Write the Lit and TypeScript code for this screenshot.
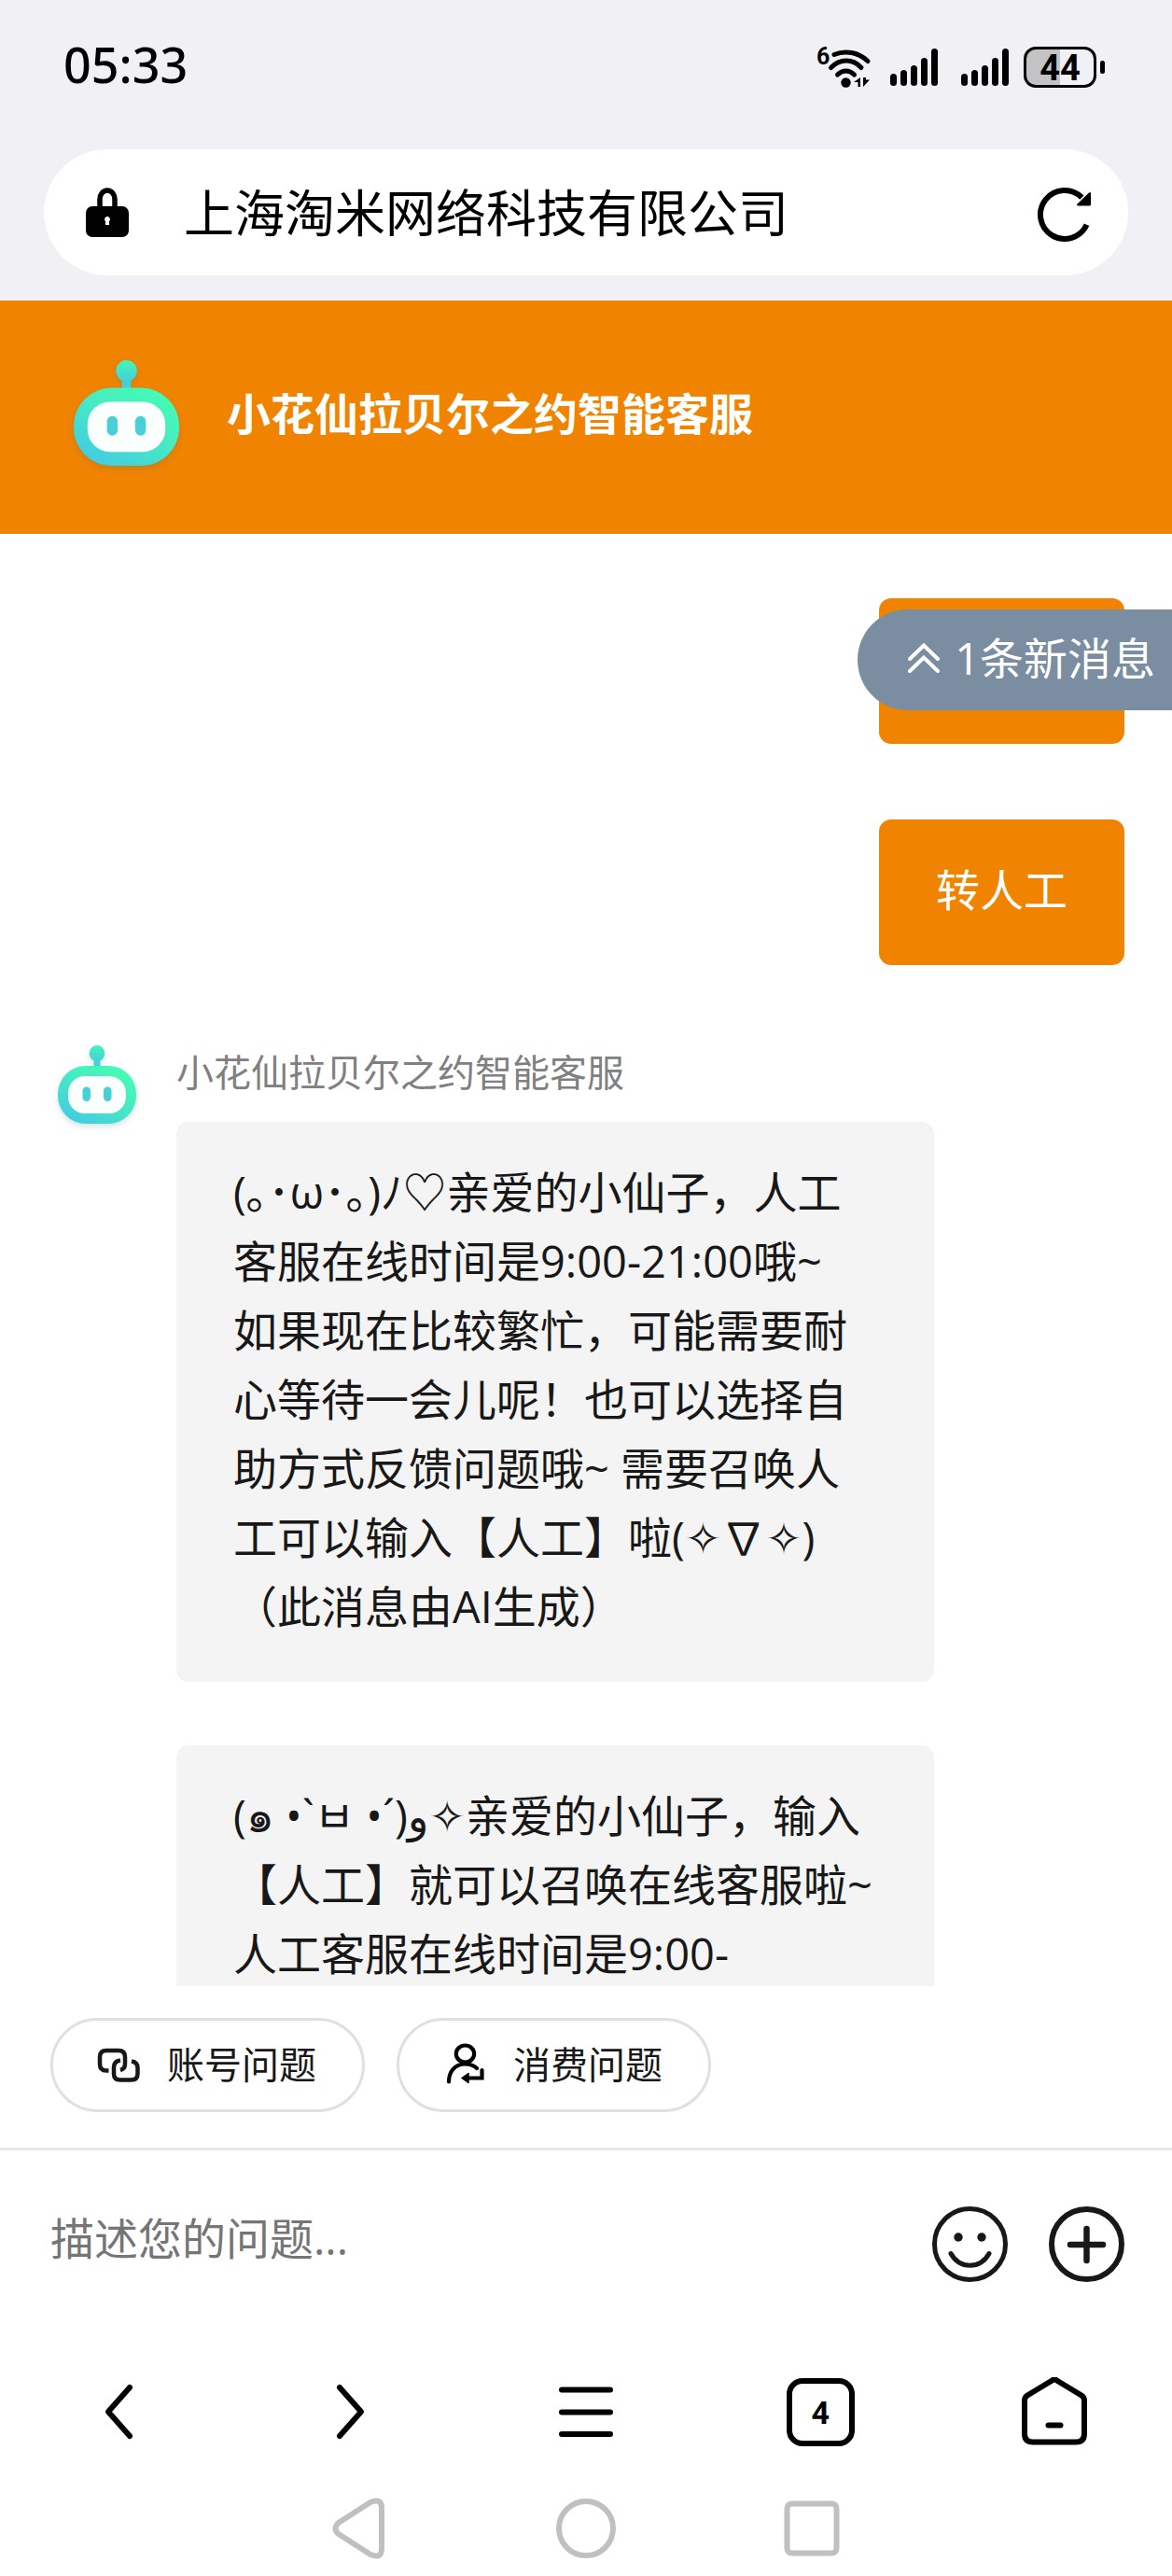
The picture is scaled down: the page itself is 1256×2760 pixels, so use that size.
import { LitElement, html, css, svg } from "lit";
import { customElement, property } from "lit/decorators.js";

@customElement("bot-avatar")
export class BotAvatar extends LitElement {
  static styles = css`
    :host {
      display: block;
      flex: none;
    }
    .robot {
      display: block;
      width: 100%;
      overflow: visible;
      filter: drop-shadow(0 3px 3px rgba(40, 110, 110, 0.2));
    }
  `;

  render() {
    return html`<svg class="robot" viewBox="0 0 84 84" aria-hidden="true">
      <defs>
        <linearGradient id="shell" x1="0.85" y1="0.1" x2="0.2" y2="1">
          <stop offset="0" stop-color="#44fbb4" />
          <stop offset="0.35" stop-color="#47eec0" />
          <stop offset="1" stop-color="#43cbe2" />
        </linearGradient>
        <linearGradient id="ball" x1="0" y1="0" x2="0" y2="1">
          <stop offset="0" stop-color="#45f6b8" />
          <stop offset="1" stop-color="#43d0dc" />
        </linearGradient>
      </defs>
      <rect x="38.5" y="13" width="7" height="12" fill="#43d2da" />
      <path d="M42 0a8.3 8.3 0 0 1 8.3 8.3c0 4-2.2 6-4.3 8h-8c-2.1-2-4.3-4-4.3-8A8.3 8.3 0 0 1 42 0z" fill="url(#ball)" />
      <rect x="0" y="22" width="84" height="62" rx="30" fill="url(#shell)" />
      <rect x="11" y="33" width="62" height="40" rx="18" fill="#fafffe" />
      <rect x="26.5" y="44.5" width="8.5" height="15.5" rx="4.2" fill="#48d0d6" />
      <rect x="49" y="44.5" width="8.5" height="15.5" rx="4.2" fill="#48d0d6" />
    </svg>`;
  }
}

@customElement("status-bar")
export class StatusBar extends LitElement {
  static styles = css`
    :host {
      display: flex;
      align-items: center;
      justify-content: space-between;
      padding: 33px 72px 31px 68px;
      color: #000;
    }
    .clock {
      margin-bottom: 6px;
      font-family: "Noto Sans", sans-serif;
      font-size: 52px;
      line-height: 72px;
      font-weight: 500;
    }
    .tray {
      display: flex;
      align-items: center;
    }
    .tray svg {
      display: block;
      overflow: visible;
    }
    .wifi {
      width: 57px;
      height: 44px;
      margin-right: 21px;
    }
    .six {
      font: 700 25px Roboto, "Liberation Sans", sans-serif;
    }
    .signal {
      width: 51px;
      height: 40px;
      margin-right: 25px;
    }
    .signal.last {
      margin-right: 16px;
    }
    .battery {
      box-sizing: border-box;
      width: 78px;
      height: 44px;
      border: 3px solid #000;
      border-radius: 13px;
      background: linear-gradient(90deg, #c3c3c6 50%, transparent 50%);
      font: 700 38px/40px Roboto, "Liberation Sans", sans-serif;
      text-align: center;
    }
    .nub {
      width: 5px;
      height: 14px;
      margin-left: 4px;
      border-radius: 3px;
      background: #000;
    }
  `;

  private signal(extra: string) {
    const heights = [13, 17, 22, 30, 40];
    return html`<svg class="signal ${extra}" viewBox="0 0 51 40" aria-hidden="true">
      ${heights.map(
        (h, i) => svg`<rect x=${i * 11} y=${40 - h} width="7" height=${h} rx="3.5" />`
      )}
    </svg>`;
  }

  render() {
    return html`
      <time class="clock">05:33</time>
      <div class="tray">
        <svg class="wifi" viewBox="0 0 57 44" role="img" aria-label="Wi-Fi 6">
          <text class="six" x="-1" y="19">6</text>
          <g fill="none" stroke="#000" stroke-width="5" stroke-linecap="round">
            <path d="M18 8.5C30 3.5 44 6 54 15.5" />
            <path d="M14.5 22.5C24 12.5 38 12.5 47 22.5" />
            <path d="M21.5 30C27 24.5 34 24.5 39.5 30" />
          </g>
          <circle cx="30.5" cy="38.5" r="5.2" />
          <path d="M46 33v10h-2.500v-5H39zM49 33v10l7-7.500h-4V33z" />
        </svg>
        ${this.signal("")} ${this.signal("last")}
        <span class="battery">44</span><span class="nub"></span>
      </div>
    `;
  }
}

@customElement("address-bar")
export class AddressBar extends LitElement {
  static styles = css`
    :host {
      display: flex;
      align-items: center;
      box-sizing: border-box;
      height: 135px;
      margin: 18px 47px 27px;
      padding: 0 39px 0 45px;
      border-radius: 68px;
      background: #fff;
      color: #000;
    }
    .lock {
      width: 46px;
      height: 54px;
      margin-right: 59px;
    }
    .site {
      flex: 1;
      font-size: 54px;
      line-height: 72px;
    }
    .reload {
      padding: 4px 0 0;
      border: 0;
      background: none;
    }
    .reload svg {
      display: block;
      width: 58px;
      height: 58px;
      overflow: visible;
    }
  `;

  render() {
    return html`
      <svg class="lock" viewBox="0 0 46 54" aria-hidden="true">
        <path d="M15 22V12.500a8 9.500 0 0 1 16 0V22" fill="none" stroke="#000" stroke-width="5.500" />
        <rect y="20" width="46" height="33" rx="7" />
        <path d="M23 31a3 3 0 0 1 2 5.200V40h-4v-3.800A3 3 0 0 1 23 31z" fill="#fff" />
      </svg>
      <span class="site">上海淘米网络科技有限公司</span>
      <button class="reload" aria-label="刷新">
        <svg viewBox="0 0 58 58">
          <path d="M52.600 39.800A26 26 0 1 1 47.400 10.600" fill="none" stroke="#000" stroke-width="6" />
          <path d="M55 5.500c1-1 2-.5 2 1V18q0 1.500-1.500 1.500H43.500c-1.500 0-2-1-1-2z" />
        </svg>
      </button>
    `;
  }
}

@customElement("chat-bubble")
export class ChatBubble extends LitElement {
  @property({ attribute: false }) lines: string[] = [];
  @property({ reflect: true }) side: "mine" | "bot" = "bot";

  static styles = css`
    :host {
      display: block;
      padding: 38px 61px 44px;
      border-radius: 13px;
      background: #f4f4f4;
      color: #181818;
      font-size: 47px;
      line-height: 74px;
    }
    :host([side="mine"]) {
      align-self: flex-end;
      min-width: 141px;
      background: #f08300;
      color: #fff;
    }
    .line {
      display: block;
      min-height: 74px;
      white-space: nowrap;
    }
  `;

  render() {
    return this.lines.map((line) => html`<span class="line">${line}</span>`);
  }
}

@customElement("chat-log")
export class ChatLog extends LitElement {
  static styles = css`
    :host {
      position: relative;
      display: block;
      flex: 1;
      min-height: 0;
      overflow: hidden;
    }
    .log {
      display: flex;
      flex-direction: column;
      gap: 81px;
      padding: 69px 51px 0 62px;
    }
    .reply {
      display: flex;
      gap: 43px;
      padding-top: 5px;
      padding-right: 204px;
    }
    .avatar {
      width: 84px;
    }
    .thread {
      flex: 1;
      min-width: 0;
    }
    .name {
      margin-bottom: 24px;
      color: #808080;
      font-size: 40px;
      line-height: 58px;
    }
    .thread chat-bubble + chat-bubble {
      margin-top: 68px;
    }
    .unread {
      position: absolute;
      top: 81px;
      right: 0;
      display: flex;
      align-items: center;
      gap: 16px;
      height: 108px;
      padding: 0 18px 4px 54px;
      border: 0;
      border-radius: 54px 0 0 54px;
      background: #7b8da0;
      color: #fff;
      font: inherit;
      font-size: 47px;
      line-height: 74px;
    }
    .unread svg {
      width: 34px;
      height: 34px;
    }
  `;

  private greeting = [
    "(｡･ω･｡)ﾉ♡亲爱的小仙子，人工",
    "客服在线时间是9:00-21:00哦~",
    "如果现在比较繁忙，可能需要耐",
    "心等待一会儿呢！也可以选择自",
    "助方式反馈问题哦~ 需要召唤人",
    "工可以输入【人工】啦(✧∇✧)",
    "（此消息由AI生成）",
  ];

  private hint = [
    "(๑ •`ㅂ •´)و✧亲爱的小仙子，输入",
    "【人工】就可以召唤在线客服啦~",
    "人工客服在线时间是9:00-",
  ];

  render() {
    return html`
      <div class="log">
        <chat-bubble side="mine" .lines=${[""]}></chat-bubble>
        <chat-bubble side="mine" .lines=${["转人工"]}></chat-bubble>
        <div class="reply">
          <bot-avatar class="avatar"></bot-avatar>
          <div class="thread">
            <div class="name">小花仙拉贝尔之约智能客服</div>
            <chat-bubble .lines=${this.greeting}></chat-bubble>
            <chat-bubble .lines=${this.hint}></chat-bubble>
          </div>
        </div>
      </div>
      <button class="unread">
        <svg viewBox="0 0 34 34" fill="none" stroke="#fff" stroke-width="4" stroke-linecap="round" aria-hidden="true">
          <path d="M2 18L17 3.500L32 18M2 31L17 16.500L32 31" />
        </svg>
        1条新消息
      </button>
    `;
  }
}

@customElement("chat-composer")
export class ChatComposer extends LitElement {
  static styles = css`
    :host {
      display: block;
      color: #181818;
    }
    button {
      border: 0;
      background: none;
      color: inherit;
      font: inherit;
    }
    svg {
      display: block;
    }
    .chips {
      display: flex;
      gap: 34px;
      padding: 34px 54px 38px;
    }
    .chip {
      display: flex;
      align-items: center;
      gap: 29px;
      box-sizing: border-box;
      height: 101px;
      padding: 0 49px 2px 45px;
      border: 3px solid #e0e0e0;
      border-radius: 51px;
      font-size: 40px;
      line-height: 58px;
    }
    .chip svg {
      width: 48px;
      height: 48px;
    }
    .entry {
      display: flex;
      align-items: center;
      padding: 60px 51px 60px 54px;
      border-top: 3px solid #e8e8e8;
    }
    .field {
      flex: 1;
      min-width: 0;
      height: 68px;
      margin: 0 20px 13px 0;
      padding: 0;
      border: 0;
      outline: 0;
      background: none;
      color: #181818;
      font: inherit;
      font-size: 47px;
    }
    .field::placeholder {
      color: #757575;
      opacity: 1;
    }
    .tool {
      padding: 0;
    }
    .tool + .tool {
      margin-left: 44px;
    }
    .tool svg {
      width: 81px;
      height: 81px;
    }
  `;

  render() {
    return html`
      <div class="chips">
        <button class="chip">
          <svg viewBox="0 0 48 48" fill="none" stroke="#181818" stroke-width="4.500" aria-hidden="true">
            <path d="M14.500 30.500H12q-7 0-7-7V16q0-7 7-7H25q7 0 7 7v7.500q0 5-5 6.500" />
            <path d="M27 19.500q-7 1-7 7.500v7q0 6.500 7 6.500H38.500q7 0 7-6.500V27.500q0-6-6.500-7" />
          </svg>
          账号问题
        </button>
        <button class="chip">
          <svg viewBox="0 0 48 48" fill="none" stroke="#000" stroke-width="4.200" aria-hidden="true">
            <ellipse cx="25.500" cy="12.500" rx="9.700" ry="9" />
            <path d="M8 42.500C8 32 14 23.500 25.500 23.500Q33 23.500 38 28" stroke-linecap="round" />
            <path d="M43.500 30V38.500H25" stroke-linecap="round" />
            <path d="M22 38.500L29 33.500V43.500Z" fill="#000" stroke-width="1.500" stroke-linejoin="round" />
          </svg>
          消费问题
        </button>
      </div>
      <div class="entry">
        <input class="field" type="text" aria-label="描述您的问题" placeholder="描述您的问题..." />
        <button class="tool" aria-label="表情">
          <svg viewBox="0 0 81 81" fill="none" stroke="#181818" stroke-width="5">
            <circle cx="40.500" cy="40.500" r="38" />
            <circle cx="28" cy="33" r="4.700" fill="#181818" stroke="none" />
            <circle cx="53" cy="33" r="4.700" fill="#181818" stroke="none" />
            <path d="M20 50.500C29.500 67.500 51.500 67.500 61 50.500" stroke-linecap="round" />
          </svg>
        </button>
        <button class="tool" aria-label="更多">
          <svg viewBox="0 0 81 81" fill="none" stroke="#181818" stroke-width="6">
            <circle cx="40.500" cy="40.500" r="37.500" />
            <path d="M40.500 24V58M23 41H58" stroke-width="6.500" stroke-linecap="round" />
          </svg>
        </button>
      </div>
    `;
  }
}

@customElement("browser-nav")
export class BrowserNav extends LitElement {
  static styles = css`
    :host {
      display: block;
    }
    nav {
      display: grid;
    }
    .pages {
      grid-template-columns: repeat(5, 1fr);
      height: 158px;
    }
    .system {
      grid-template-columns: repeat(3, 242px);
      justify-content: center;
      box-sizing: border-box;
      height: 97px;
      padding-bottom: 6px;
    }
    button {
      display: grid;
      place-items: center;
      padding: 0;
      border: 0;
      background: none;
      color: #000;
    }
    svg {
      display: block;
      width: 74px;
      height: 74px;
      fill: none;
      stroke: #000;
      stroke-width: 6;
      stroke-linecap: round;
      stroke-linejoin: round;
    }
    .system svg {
      stroke: #c0c0c0;
    }
    .count {
      box-sizing: border-box;
      width: 73px;
      height: 73px;
      border: 6px solid #000;
      border-radius: 17px;
      font: 700 34px/63px Roboto, "Liberation Sans", sans-serif;
      text-align: center;
    }
  `;

  render() {
    return html`
      <nav class="pages" aria-label="浏览器">
        <button aria-label="后退"><svg viewBox="0 0 74 74"><path d="M50 11L27 37L50 63" /></svg></button>
        <button aria-label="前进"><svg viewBox="0 0 74 74"><path d="M24 11L47 37L24 63" /></svg></button>
        <button aria-label="菜单"><svg viewBox="0 0 74 74"><path d="M11 13.500H63M11 37.500H63M11 61H63" /></svg></button>
        <button><span class="count">4</span></button>
        <button aria-label="主页">
          <svg viewBox="0 0 74 74">
            <path d="M34.500 3.500Q37 1.500 39.500 3.500L66 19.500Q69 21.500 69 25V60.500Q69 69.500 60 69.500H14Q5 69.500 5 60.500V25Q5 21.500 8 19.500Z" />
            <path d="M30.500 51.500H43.500" />
          </svg>
        </button>
      </nav>
      <nav class="system" aria-label="系统">
        <button aria-label="返回">
          <svg viewBox="0 0 74 74"><path d="M13 31.500L48 9Q60 4 60 15V59Q60 70 48 65L13 42.500Q8 37 13 31.500Z" /></svg>
        </button>
        <button aria-label="桌面"><svg viewBox="0 0 74 74"><circle cx="37" cy="37" r="29" /></svg></button>
        <button aria-label="最近任务"><svg viewBox="0 0 74 74"><rect x="10.500" y="10.500" width="53" height="53" rx="5" /></svg></button>
      </nav>
    `;
  }
}

@customElement("app-root")
export class AppRoot extends LitElement {
  static styles = css`
    :host {
      display: flex;
      flex-direction: column;
      height: 100vh;
      overflow: hidden;
      background: #fff;
      font-family: "Open Sans", "Noto Sans CJK SC", "DejaVu Sans", sans-serif;
    }
    .chrome {
      background: #f0f0f5;
    }
    .brand {
      display: flex;
      align-items: center;
      gap: 51px;
      box-sizing: border-box;
      height: 250px;
      padding: 0 79px 9px;
      background: #f08300;
      color: #fff;
    }
    .logo {
      width: 113px;
    }
    .title {
      margin: 0;
      font-size: 47px;
      line-height: 74px;
      font-weight: 700;
    }
  `;

  render() {
    return html`
      <div class="chrome">
        <status-bar></status-bar>
        <address-bar></address-bar>
      </div>
      <header class="brand">
        <bot-avatar class="logo"></bot-avatar>
        <h1 class="title">小花仙拉贝尔之约智能客服</h1>
      </header>
      <chat-log></chat-log>
      <chat-composer></chat-composer>
      <browser-nav></browser-nav>
    `;
  }
}
